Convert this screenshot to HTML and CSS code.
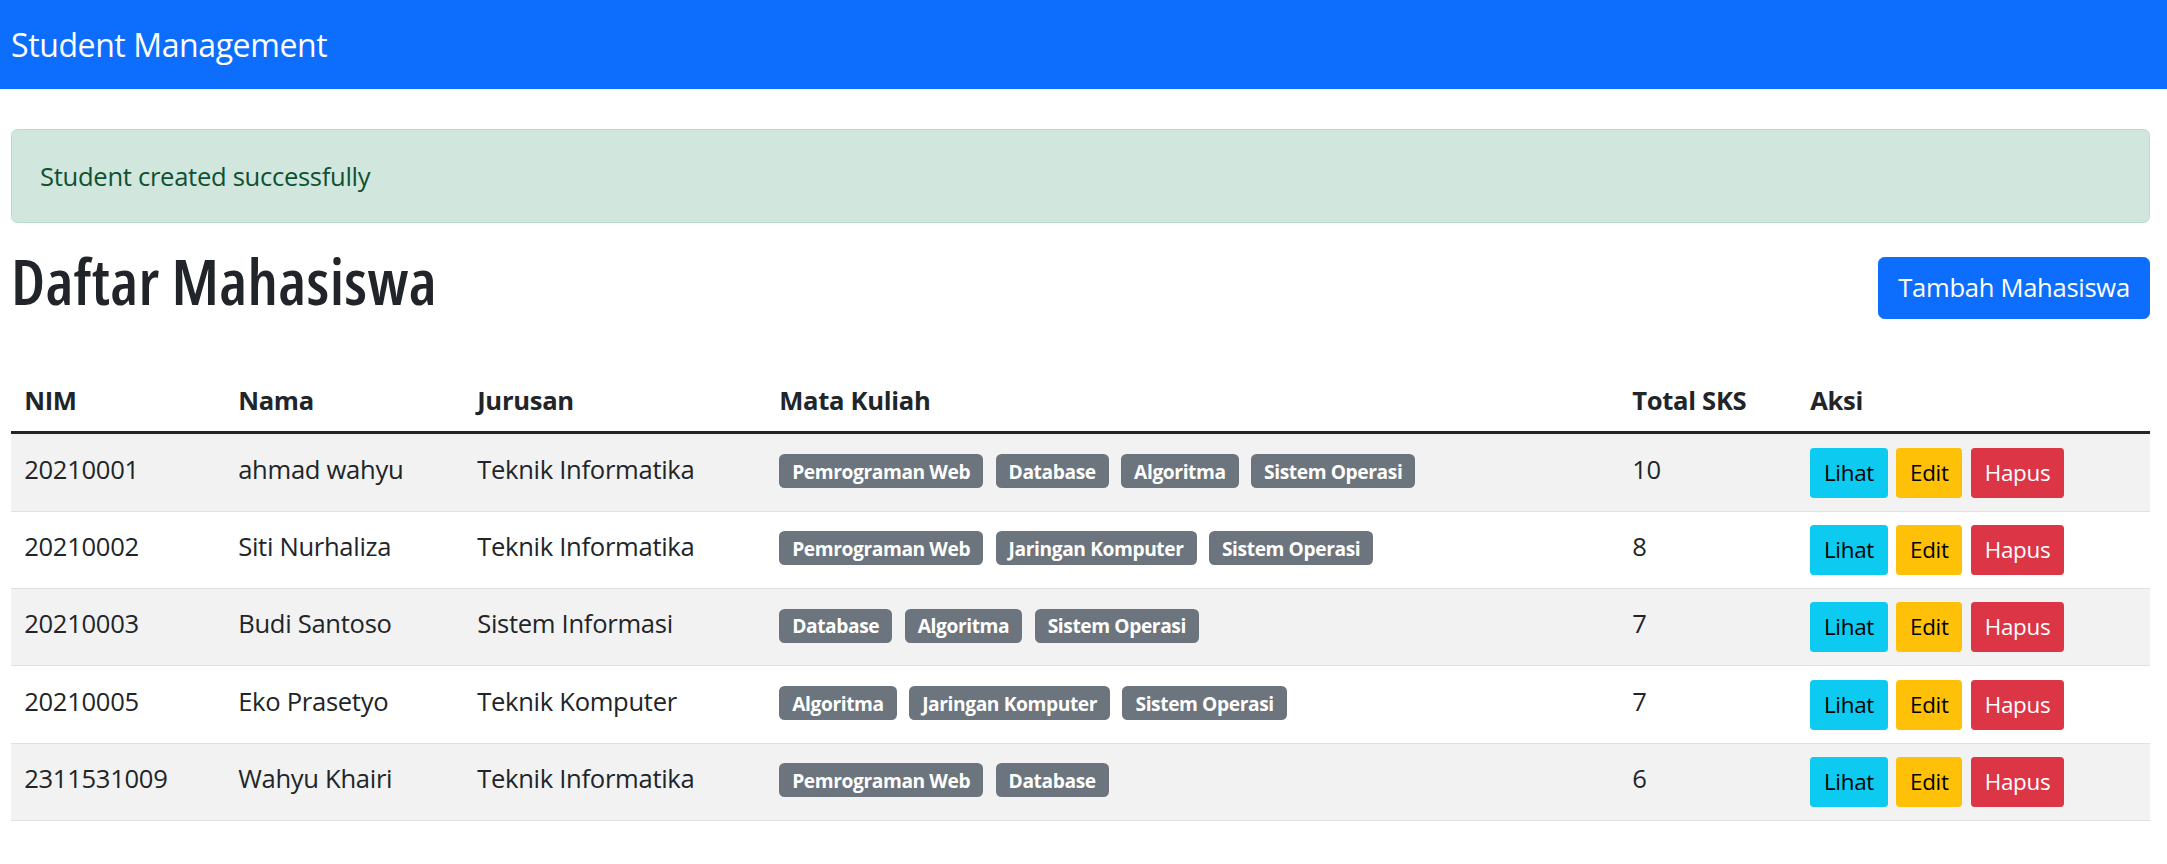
FILE: index.html
```html
<!DOCTYPE html>
<html lang="id">
<head>
<meta charset="utf-8">
<title>Student Management</title>
<link rel="stylesheet" href="styles.css">
</head>
<body>
<nav class="navbar">
  <a class="brand" href="#">Student Management</a>
</nav>
<main class="page">
  <div class="alert">Student created successfully</div>
  <div class="head-row">
    <h1 class="title">Daftar Mahasiswa</h1>
    <a class="btn btn-primary" href="#">Tambah Mahasiswa</a>
  </div>
  <table class="table">
    <thead>
      <tr>
        <th class="c-nim">NIM</th>
        <th class="c-nama">Nama</th>
        <th class="c-jur">Jurusan</th>
        <th class="c-mk">Mata Kuliah</th>
        <th class="c-sks">Total SKS</th>
        <th class="c-aksi">Aksi</th>
      </tr>
    </thead>
    <tbody>
      <tr class="odd">
        <td>20210001</td><td>ahmad wahyu</td><td>Teknik Informatika</td>
        <td><span class="badge">Pemrograman Web</span><span class="badge">Database</span><span class="badge">Algoritma</span><span class="badge">Sistem Operasi</span></td>
        <td>10</td>
        <td><div class="actions"><a class="btn-sm b-info" href="#">Lihat</a><a class="btn-sm b-warn" href="#">Edit</a><a class="btn-sm b-danger" href="#">Hapus</a></div></td>
      </tr>
      <tr>
        <td>20210002</td><td>Siti Nurhaliza</td><td>Teknik Informatika</td>
        <td><span class="badge">Pemrograman Web</span><span class="badge">Jaringan Komputer</span><span class="badge">Sistem Operasi</span></td>
        <td>8</td>
        <td><div class="actions"><a class="btn-sm b-info" href="#">Lihat</a><a class="btn-sm b-warn" href="#">Edit</a><a class="btn-sm b-danger" href="#">Hapus</a></div></td>
      </tr>
      <tr class="odd">
        <td>20210003</td><td>Budi Santoso</td><td>Sistem Informasi</td>
        <td><span class="badge">Database</span><span class="badge">Algoritma</span><span class="badge">Sistem Operasi</span></td>
        <td>7</td>
        <td><div class="actions"><a class="btn-sm b-info" href="#">Lihat</a><a class="btn-sm b-warn" href="#">Edit</a><a class="btn-sm b-danger" href="#">Hapus</a></div></td>
      </tr>
      <tr>
        <td>20210005</td><td>Eko Prasetyo</td><td>Teknik Komputer</td>
        <td><span class="badge">Algoritma</span><span class="badge">Jaringan Komputer</span><span class="badge">Sistem Operasi</span></td>
        <td>7</td>
        <td><div class="actions"><a class="btn-sm b-info" href="#">Lihat</a><a class="btn-sm b-warn" href="#">Edit</a><a class="btn-sm b-danger" href="#">Hapus</a></div></td>
      </tr>
      <tr class="odd">
        <td>2311531009</td><td>Wahyu Khairi</td><td>Teknik Informatika</td>
        <td><span class="badge">Pemrograman Web</span><span class="badge">Database</span></td>
        <td>6</td>
        <td><div class="actions"><a class="btn-sm b-info" href="#">Lihat</a><a class="btn-sm b-warn" href="#">Edit</a><a class="btn-sm b-danger" href="#">Hapus</a></div></td>
      </tr>
    </tbody>
  </table>
</main>
</body>
</html>
```
FILE: styles.css
```css
* { box-sizing: border-box; }
html, body { margin: 0; padding: 0; }
body {
  font-family: "Segoe UI", "Open Sans", "Noto Sans", sans-serif;
  font-size: 25.6px;
  line-height: 1.5;
  color: #212529;
  background: #fff;
}
a { text-decoration: none; }

.navbar {
  background: #0d6efd;
  height: 89px;
  display: flex;
  align-items: center;
  padding: 0 11px;
}
.brand {
  color: #fff;
  font-size: 32px;
  line-height: 48px;
  letter-spacing: -0.4px;
}

.page {
  padding: 0 17px 0 11px;
}

.alert {
  margin-top: 40px;
  margin-bottom: 20px;
  padding: 28.4px 28px 25.2px;
  background: #d1e7dd;
  color: #0f5132;
  border: 1px solid #badbcc;
  border-radius: 6.4px;
  letter-spacing: -0.3px;
}

.head-row {
  display: flex;
  justify-content: space-between;
  align-items: center;
  margin-bottom: 34px;
}
.title {
  margin: 0 0 12.8px 0;
  font-family: "Segoe UI", "Open Sans", sans-serif;
  font-size: 64px;
  line-height: 76.8px;
  font-weight: 600;
  font-stretch: 87.5%;
  letter-spacing: 0.3px;
}
.btn {
  display: inline-block;
  padding: 10.8px 19.2px;
  border: 1px solid transparent;
  border-radius: 6.4px;
  font-size: 25.6px;
  line-height: 38.4px;
  letter-spacing: -0.3px;
}
.btn-primary {
  background: #0d6efd;
  border-color: #0d6efd;
  color: #fff;
}

.table {
  width: 100%;
  border-collapse: collapse;
  table-layout: fixed;
  vertical-align: top;
}
.table th, .table td {
  text-align: left;
  letter-spacing: -0.3px;
}
.table th {
  padding: 15px 13.2px 11.4px;
  font-weight: 700;
  border-bottom: 3px solid #212529;
  vertical-align: bottom;
}
.table td {
  padding: 13.2px;
  line-height: 44.4px;
  border-bottom: 1px solid #dee2e6;
  vertical-align: top;
}
.table tr.odd td { background: #f2f2f2; }

.c-nim { width: 214px; }
.c-nama { width: 239px; }
.c-jur { width: 302px; }
.c-mk { width: 853px; }
.c-sks { width: 178px; }
.c-aksi { width: 353px; }

.badge {
  display: inline-block;
  background: #6c757d;
  color: #fff;
  font-size: 19.2px;
  font-weight: 700;
  line-height: 1;
  padding: 7.6px 13px 7.2px;
  border-radius: 5.5px;
  margin-right: 12.4px;
  letter-spacing: -0.4px;
  vertical-align: baseline;
}

.actions {
  display: flex;
  gap: 8.5px;
}
.btn-sm {
  display: inline-block;
  padding: 7.2px 12.8px;
  border: 1px solid transparent;
  border-radius: 3.2px;
  font-size: 22.4px;
  line-height: 33.6px;
  letter-spacing: -0.3px;
}
.b-info { background: #0dcaf0; border-color: #0dcaf0; color: #000; }
.b-warn { background: #ffc107; border-color: #ffc107; color: #000; }
.b-danger { background: #dc3545; border-color: #dc3545; color: #fff; }
```
